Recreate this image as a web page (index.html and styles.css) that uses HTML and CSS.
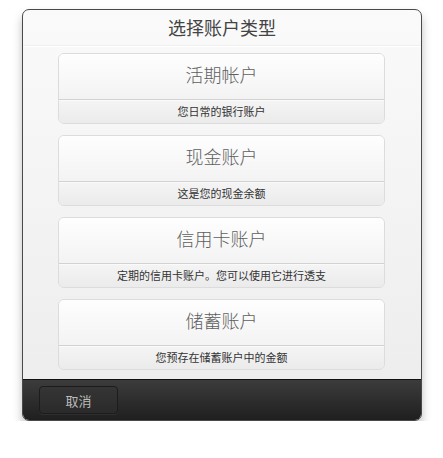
FILE: index.html
```html
<!DOCTYPE html>
<html>
<head>
<meta charset="utf-8">
<link rel="stylesheet" href="styles.css">
</head>
<body>
<div class="dialog">
  <div class="header">选择账户类型</div>
  <div class="list">
    <div class="card">
      <div class="card-title">活期帐户</div>
      <div class="card-desc">您日常的银行账户</div>
    </div>
    <div class="card">
      <div class="card-title">现金账户</div>
      <div class="card-desc">这是您的现金余额</div>
    </div>
    <div class="card">
      <div class="card-title">信用卡账户</div>
      <div class="card-desc">定期的信用卡账户。您可以使用它进行透支</div>
    </div>
    <div class="card">
      <div class="card-title">储蓄账户</div>
      <div class="card-desc">您预存在储蓄账户中的金额</div>
    </div>
  </div>
  <div class="footer">
    <div class="btn">取消</div>
  </div>
</div>
</body>
</html>
```
FILE: styles.css
```css
html, body {
  margin: 0;
  padding: 0;
  background: #fff;
}
body {
  padding: 9px 0 0 22px;
  font-family: "Noto Sans CJK SC", "Noto Sans", sans-serif;
}
.dialog {
  width: 398px;
  height: 410px;
  border: 1px solid #4a4a4a;
  border-radius: 7px;
  background: linear-gradient(#fafafa, #ececec);
  box-shadow: 0 6px 10px rgba(0,0,0,0.25);
  display: flex;
  flex-direction: column;
  overflow: hidden;
}
.header {
  height: 34px;
  display: flex;
  align-items: center;
  justify-content: center;
  font-size: 18px;
  color: #444;
  border-bottom: 1px solid #f0f0f0;
  box-shadow: 0 1px 0 #fff;
  padding-bottom: 1px;
}
.list {
  flex: 1;
  display: flex;
  flex-direction: column;
  gap: 11px;
  padding: 7px 0 0 35px;
}
.card {
  width: 325px;
  height: 69px;
  border: 1px solid #dcdcdc;
  border-radius: 6px;
  display: flex;
  flex-direction: column;
  overflow: hidden;
}
.card-title {
  height: 46px;
  flex: none;
  background: linear-gradient(#fefefe, #f3f3f3);
  border-bottom: 1px solid #d2d2d2;
  display: flex;
  align-items: center;
  justify-content: center;
  font-size: 18px;
  font-weight: 300;
  color: #5e5e5e;
  padding-bottom: 5px;
  box-sizing: border-box;
}
.card-desc {
  flex: 1;
  background: linear-gradient(#f4f4f4, #ebebeb);
  border-top: 1px solid #fafafa;
  display: flex;
  align-items: center;
  justify-content: center;
  font-size: 11px;
  color: #333;
  padding-bottom: 2px;
}
.footer {
  height: 41px;
  border-top: 1px solid #111;
  background: linear-gradient(#3c3c3c, #1f1f1f);
  padding: 6px 0 0 16px;
  box-sizing: border-box;
}
.btn {
  width: 79px;
  height: 28px;
  box-sizing: border-box;
  border: 1px solid #1c1c1c;
  border-radius: 4px;
  background: linear-gradient(#353535, #2a2a2a);
  box-shadow: 0 1px 0 rgba(255,255,255,0.06);
  color: #bbb;
  font-size: 13px;
  display: flex;
  align-items: center;
  justify-content: center;
}
```
